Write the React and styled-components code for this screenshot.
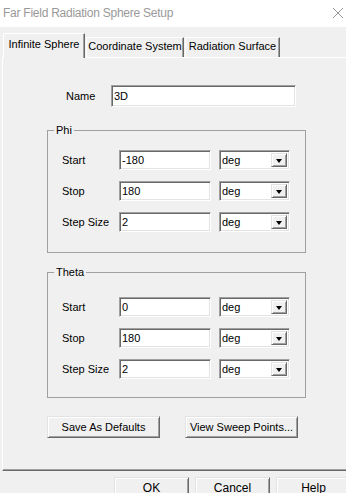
import React from "react";
import styled, { createGlobalStyle } from "styled-components";

const GlobalStyle = createGlobalStyle`
  html, body { margin: 0; padding: 0; background: #f0f0f0; overflow: hidden; }
  body {
    font-family: "Liberation Sans", Arial, sans-serif;
    font-size: 11px;
    color: #000;
  }
  * { box-sizing: border-box; }
`;

const Window = styled.div`
  width: 346px;
  height: 493px;
  overflow: hidden;
  background: #f0f0f0;
  display: flex;
  flex-direction: column;
`;

const TitleBar = styled.div`
  height: 27px;
  flex: none;
  background: #fff;
  display: flex;
  align-items: center;
  justify-content: space-between;
  padding: 0 1px 2px 3px;
`;

const Title = styled.span`
  font-size: 12px;
  letter-spacing: -0.25px;
  color: #999;
`;

const TabStrip = styled.div`
  display: flex;
  align-items: flex-end;
  gap: 1px;
  height: 24px;
  margin-top: 6px;
  padding-left: 3px;
  flex: none;
`;

const Tab = styled.div`
  width: ${(p) => p.$w}px;
  height: ${(p) => (p.$active ? 25 : 20)}px;
  margin-bottom: ${(p) => (p.$active ? -1 : 0)}px;
  position: relative;
  z-index: ${(p) => (p.$active ? 1 : 0)};
  background: #f0f0f0;
  border-top: 1px solid #fff;
  border-left: 1px solid #fff;
  border-right: 1px solid #696969;
  box-shadow: inset -1px 0 #a0a0a0;
  display: flex;
  justify-content: center;
  padding-top: ${(p) => (p.$active ? 4 : 2)}px;
  white-space: nowrap;
`;

const Panel = styled.div`
  margin-left: 2px;
  width: 360px;
  height: 414px;
  flex: none;
  border-top: 1px solid #fff;
  border-left: 1px solid #fff;
  border-bottom: 1px solid #696969;
  box-shadow: inset 0 -1px #a0a0a0;
  display: flex;
  flex-direction: column;
  align-items: flex-start;
`;

const NameRow = styled.div`
  display: flex;
  align-items: center;
  margin-top: 27px;
  padding-left: 63px;
`;

const NameLabel = styled.span`
  width: 45px;
`;

const Sunken = styled.div`
  width: ${(p) => p.$w}px;
  height: ${(p) => p.$h || 20}px;
  background: #fff;
  border-top: 1px solid #a0a0a0;
  border-left: 1px solid #a0a0a0;
  border-right: 1px solid #fff;
  border-bottom: 1px solid #fff;
  box-shadow: inset 1px 1px #696969, inset -1px -1px #e3e3e3;
  display: flex;
  align-items: center;
  padding-left: 2px;
  position: relative;
  white-space: nowrap;
`;

const Group = styled.fieldset`
  margin: ${(p) => p.$mt}px 0 0 44px;
  width: 259px;
  border: 1px solid #a0a0a0;
  padding: ${(p) => p.$pt}px 0 ${(p) => p.$pb}px 0;
  min-width: 0;
`;

const Legend = styled.legend`
  margin-left: 6px;
  padding: 0 2px;
  line-height: 14px;
  font-size: 11px;
`;

const Rows = styled.div`
  display: flex;
  flex-direction: column;
  gap: 11px;
`;

const Row = styled.div`
  display: flex;
  align-items: center;
  padding-left: 14px;
  gap: 8px;
`;

const RowLabel = styled.span`
  width: 49px;
`;

const DropButton = styled.div`
  position: absolute;
  right: 2px;
  top: 2px;
  width: 16px;
  height: 14px;
  background: #f0f0f0;
  border-top: 1px solid #e3e3e3;
  border-left: 1px solid #e3e3e3;
  border-right: 1px solid #696969;
  border-bottom: 1px solid #696969;
  box-shadow: inset 1px 1px #fff, inset -1px -1px #a0a0a0;
  display: flex;
  align-items: center;
  justify-content: center;
`;

const Arrow = styled.span`
  width: 0;
  height: 0;
  border-left: 3.5px solid transparent;
  border-right: 3.5px solid transparent;
  border-top: 4px solid #000;
  margin-top: 1px;
`;

const ButtonRow = styled.div`
  display: flex;
  gap: 25px;
  margin-top: 18px;
  padding-left: 44px;
`;

const Button = styled.div`
  width: ${(p) => p.$w}px;
  height: ${(p) => p.$h}px;
  flex: none;
  background: #f0f0f0;
  border-top: 1px solid #e3e3e3;
  border-left: 1px solid #e3e3e3;
  border-right: 1px solid #696969;
  border-bottom: 1px solid #696969;
  box-shadow: inset 1px 1px #fff, inset -1px -1px #a0a0a0;
  display: flex;
  align-items: ${(p) => (p.$top ? "flex-start" : "center")};
  padding-top: ${(p) => (p.$top ? 3 : 0)}px;
  justify-content: center;
  font-size: ${(p) => (p.$big ? 12 : 11)}px;
  white-space: nowrap;
`;

const Footer = styled.div`
  display: flex;
  gap: 6px;
  margin-top: 6px;
  padding-left: 114px;
`;

const CloseIcon = () => (
  <svg width="12" height="12" viewBox="0 0 12 12" style={{ marginRight: 1 }}>
    <path d="M1 1 L11 11 M11 1 L1 11" stroke="#9a9a9a" strokeWidth="1" fill="none" />
  </svg>
);

const Field = ({ label, value }) => (
  <Row>
    <RowLabel>{label}</RowLabel>
    <Sunken $w={92}>{value}</Sunken>
    <Sunken $w={71}>
      deg
      <DropButton>
        <Arrow />
      </DropButton>
    </Sunken>
  </Row>
);

export default function App() {
  return (
    <Window>
      <GlobalStyle />
      <TitleBar>
        <Title>Far Field Radiation Sphere Setup</Title>
        <CloseIcon />
      </TitleBar>
      <TabStrip>
        <Tab $active $w={82}>Infinite Sphere</Tab>
        <Tab $w={98}>Coordinate System</Tab>
        <Tab $w={95}>Radiation Surface</Tab>
      </TabStrip>
      <Panel>
        <NameRow>
          <NameLabel>Name</NameLabel>
          <Sunken $w={185} $h={22}>3D</Sunken>
        </NameRow>
        <Group $mt={16} $pt={13} $pb={20}>
          <Legend>Phi</Legend>
          <Rows>
            <Field label="Start" value="-180" />
            <Field label="Stop" value="180" />
            <Field label="Step Size" value="2" />
          </Rows>
        </Group>
        <Group $mt={12} $pt={18} $pb={18}>
          <Legend>Theta</Legend>
          <Rows>
            <Field label="Start" value="0" />
            <Field label="Stop" value="180" />
            <Field label="Step Size" value="2" />
          </Rows>
        </Group>
        <ButtonRow>
          <Button $w={113} $h={22}>Save As Defaults</Button>
          <Button $w={113} $h={22}>View Sweep Points...</Button>
        </ButtonRow>
      </Panel>
      <Footer>
        <Button $w={75} $h={24} $top $big>OK</Button>
        <Button $w={75} $h={24} $top $big>Cancel</Button>
        <Button $w={75} $h={24} $top $big>Help</Button>
      </Footer>
    </Window>
  );
}
